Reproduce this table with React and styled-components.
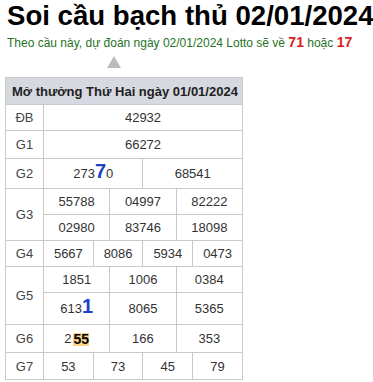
import React from "react"
import styled, { createGlobalStyle } from "styled-components"

const GlobalStyle = createGlobalStyle`
    body{
        margin:0;
        background:#fff;
        font-family:"Liberation Sans", Arial, sans-serif;
    }
`

const Page = styled.div`
    padding:0 5px;
    width:373px;
    box-sizing:border-box;
`

const Title = styled.h1`
    margin:0 0 0 2px;
    font-size:27.6px;
    line-height:32px;
    font-weight:700;
    color:#000;
    white-space:nowrap;
`

const Lead = styled.p`
    margin:0 0 0 2px;
    height:20px;
    line-height:21px;
    font-size:12px;
    color:#267326;
    white-space:nowrap;
`

const Hot = styled.b`
    color:#dd1c1c;
    font-size:14px;
`

const Pointer = styled.div`
    width:0;
    height:0;
    margin:4px 0 0 102px;
    border-left:7px solid transparent;
    border-right:7px solid transparent;
    border-bottom:12px solid #bcbcbc;
`

const Table = styled.table`
    margin-top:9px;
    width:238px;
    table-layout:fixed;
    border-collapse:collapse;
    border:1px solid #c9c9c9;
    font-size:13px;
    color:#333;
`

const Head = styled.th`
    height:26px;
    padding:0 6px;
    background:#d6d9e0;
    text-align:left;
    font-size:13px;
    font-weight:700;
    color:#222;
    border:1px solid #c9c9c9;
    white-space:nowrap;
`

const Label = styled.td`
    height:${p => p.h - 1}px;
    padding:0;
    text-align:center;
    color:#444;
    border:1px solid #c9c9c9;
`

const Cell = styled.td`
    height:${p => p.h - 1}px;
    padding:0;
    text-align:center;
    border:1px solid #c9c9c9;
    white-space:nowrap;
`

const Blue = styled.b`
    color:#1d40c9;
    font-size:20px;
    line-height:0;
`

const Mark = styled.b`
    display:inline-block;
    height:13px;
    line-height:13px;
    font-size:14px;
    margin-left:2px;
    color:#000;
    background:#fcd38a;
    vertical-align:-1px;
`

const rows = [
    { label: "ĐB", lines: [{ h: 26, span: 12, cells: ["42932"] }] },
    { label: "G1", lines: [{ h: 28, span: 12, cells: ["66272"] }] },
    { label: "G2", lines: [{ h: 30, span: 6, cells: [<>273<Blue>7</Blue>0</>, "68541"] }] },
    {
        label: "G3", lines: [
            { h: 26, span: 4, cells: ["55788", "04997", "82222"] },
            { h: 26, span: 4, cells: ["02980", "83746", "18098"] },
        ]
    },
    { label: "G4", lines: [{ h: 26, span: 3, cells: ["5667", "8086", "5934", "0473"] }] },
    {
        label: "G5", lines: [
            { h: 26, span: 4, cells: ["1851", "1006", "0384"] },
            { h: 32, span: 4, cells: [<>613<Blue>1</Blue></>, "8065", "5365"] },
        ]
    },
    { label: "G6", lines: [{ h: 28, span: 4, cells: [<>2<Mark>55</Mark></>, "166", "353"] }] },
    { label: "G7", lines: [{ h: 27, span: 3, cells: ["53", "73", "45", "79"] }] },
]

export default function App() {
    return (
        <Page>
            <GlobalStyle />
            <Title>Soi cầu bạch thủ 02/01/2024</Title>
            <Lead>
                Theo cầu này, dự đoán ngày 02/01/2024 Lotto sẽ về <Hot>71</Hot> hoặc <Hot>17</Hot>
            </Lead>
            <Pointer />
            <Table>
                <colgroup>
                    <col style={{ width: 38 }} />
                    {Array.from({ length: 12 }, (_, i) => <col key={i} />)}
                </colgroup>
                <thead>
                    <tr>
                        <Head colSpan={13}>Mở thưởng Thứ Hai ngày 01/01/2024</Head>
                    </tr>
                </thead>
                <tbody>
                    {rows.map(row => row.lines.map((line, i) => (
                        <tr key={row.label + i}>
                            {i === 0 && (
                                <Label h={line.h} rowSpan={row.lines.length}>{row.label}</Label>
                            )}
                            {line.cells.map((c, j) => (
                                <Cell key={j} h={line.h} colSpan={line.span}>{c}</Cell>
                            ))}
                        </tr>
                    )))}
                </tbody>
            </Table>
        </Page>
    )
}
